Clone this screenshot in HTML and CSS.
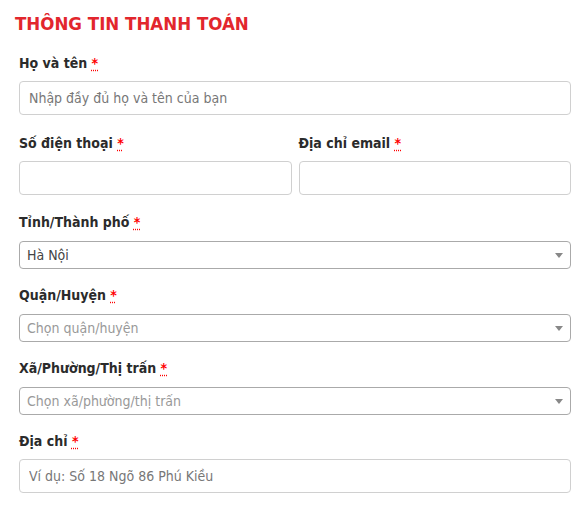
FILE: index.html
```html
<!DOCTYPE html>
<html lang="vi">
<head>
<meta charset="utf-8">
<link rel="stylesheet" href="styles.css">
</head>
<body>
<div class="billing">
  <h3 class="title">THÔNG TIN THANH TOÁN</h3>
  <div class="fields">
    <div class="field">
      <label class="label">Họ và tên <abbr class="req" title="bắt buộc">*</abbr></label>
      <input class="input" type="text" placeholder="Nhập đầy đủ họ và tên của bạn">
    </div>
    <div class="row">
      <div class="field">
        <label class="label">Số điện thoại <abbr class="req" title="bắt buộc">*</abbr></label>
        <input class="input" type="text">
      </div>
      <div class="field">
        <label class="label">Địa chỉ email <abbr class="req" title="bắt buộc">*</abbr></label>
        <input class="input" type="text">
      </div>
    </div>
    <div class="field field-select">
      <label class="label">Tỉnh/Thành phố <abbr class="req" title="bắt buộc">*</abbr></label>
      <div class="select"><span class="value">Hà Nội</span><span class="arrow"></span></div>
    </div>
    <div class="field field-select">
      <label class="label">Quận/Huyện <abbr class="req" title="bắt buộc">*</abbr></label>
      <div class="select"><span class="value placeholder">Chọn quận/huyện</span><span class="arrow"></span></div>
    </div>
    <div class="field field-select">
      <label class="label">Xã/Phường/Thị trấn <abbr class="req" title="bắt buộc">*</abbr></label>
      <div class="select"><span class="value placeholder">Chọn xã/phường/thị trấn</span><span class="arrow"></span></div>
    </div>
    <div class="field">
      <label class="label">Địa chỉ <abbr class="req" title="bắt buộc">*</abbr></label>
      <input class="input" type="text" placeholder="Ví dụ: Số 18 Ngõ 86 Phú Kiều">
    </div>
  </div>
</div>
</body>
</html>
```
FILE: styles.css
```css
* { box-sizing: border-box; }
html, body { margin: 0; padding: 0; background: #fff; }
body {
  font-family: "DejaVu Sans Condensed", "DejaVu Sans", sans-serif;
  color: #333;
}
.billing { width: 585px; padding-top: 12px; }
.title {
  margin: 0 0 0 15px;
  font-size: 18.5px;
  line-height: 24px;
  font-weight: bold;
  color: #e2262d;
}
.fields {
  padding: 0 14px 0 19px;
  margin-top: 17px;
}
.field { display: flex; flex-direction: column; margin-bottom: 18px; }
.row { display: grid; grid-template-columns: 1fr 1fr; column-gap: 7px; }
.row .field { margin-bottom: 17px; }
.field-select { margin-bottom: 16px; }
.label {
  font-size: 14px;
  line-height: 20px;
  font-weight: bold;
  color: #2b2b2b;
  margin-bottom: 8px;
}
.field-select .label { margin-bottom: 9px; }
.req {
  color: #f00;
  text-decoration: underline dotted #f00;
  text-underline-offset: 2px;
  border: 0;
}
.input {
  height: 34px;
  width: 100%;
  border: 1px solid #d0d0d0;
  border-radius: 4px;
  padding: 0 9px;
  font-family: inherit;
  font-size: 14px;
  color: #555;
  background: #fff;
  outline: none;
}
.input::placeholder { color: #777; }
.select {
  height: 28px;
  border: 1px solid #aaa;
  border-radius: 4px;
  display: flex;
  align-items: center;
  justify-content: space-between;
  padding: 0 7px;
  background: #fff;
}
.value { font-size: 14px; color: #444; }
.value.placeholder { color: #999; }
.arrow {
  width: 0; height: 0;
  border-left: 4px solid transparent;
  border-right: 4px solid transparent;
  border-top: 5px solid #888;
}
```
